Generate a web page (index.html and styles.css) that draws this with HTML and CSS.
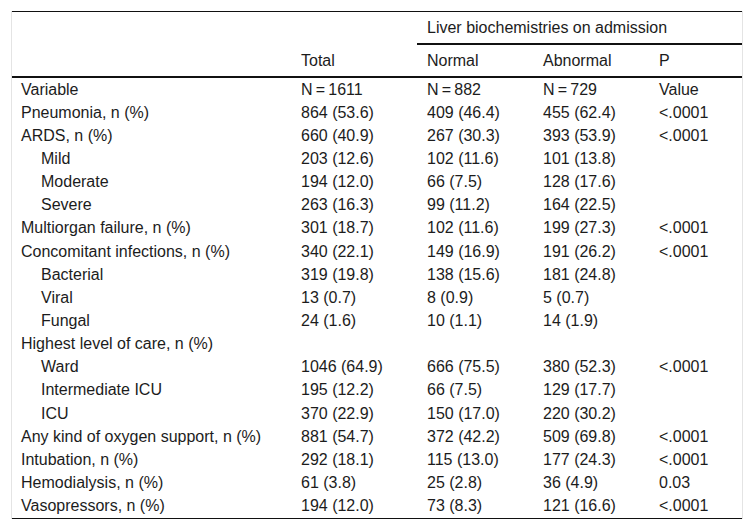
FILE: index.html
```html
<!DOCTYPE html>
<html>
<head>
<meta charset="utf-8">
<link rel="stylesheet" href="styles.css">
</head>
<body>
<div class="wrap">
<table class="tbl">
<colgroup>
<col class="c1"><col class="c2"><col class="c3"><col class="c4"><col class="c5">
</colgroup>
<thead>
<tr class="h1">
<th></th><th></th><th class="span" colspan="3">Liver biochemistries on admission</th>
</tr>
<tr class="h2">
<th></th><th>Total</th><th>Normal</th><th>Abnormal</th><th>P</th>
</tr>
</thead>
<tbody>
<tr><td>Variable</td><td>N&thinsp;=&thinsp;1611</td><td>N&thinsp;=&thinsp;882</td><td>N&thinsp;=&thinsp;729</td><td>Value</td></tr>
<tr><td>Pneumonia, n (%)</td><td>864 (53.6)</td><td>409 (46.4)</td><td>455 (62.4)</td><td>&lt;.0001</td></tr>
<tr><td>ARDS, n (%)</td><td>660 (40.9)</td><td>267 (30.3)</td><td>393 (53.9)</td><td>&lt;.0001</td></tr>
<tr><td class="ind">Mild</td><td>203 (12.6)</td><td>102 (11.6)</td><td>101 (13.8)</td><td></td></tr>
<tr><td class="ind">Moderate</td><td>194 (12.0)</td><td>66 (7.5)</td><td>128 (17.6)</td><td></td></tr>
<tr><td class="ind">Severe</td><td>263 (16.3)</td><td>99 (11.2)</td><td>164 (22.5)</td><td></td></tr>
<tr><td>Multiorgan failure, n (%)</td><td>301 (18.7)</td><td>102 (11.6)</td><td>199 (27.3)</td><td>&lt;.0001</td></tr>
<tr><td>Concomitant infections, n (%)</td><td>340 (22.1)</td><td>149 (16.9)</td><td>191 (26.2)</td><td>&lt;.0001</td></tr>
<tr><td class="ind">Bacterial</td><td>319 (19.8)</td><td>138 (15.6)</td><td>181 (24.8)</td><td></td></tr>
<tr><td class="ind">Viral</td><td>13 (0.7)</td><td>8 (0.9)</td><td>5 (0.7)</td><td></td></tr>
<tr><td class="ind">Fungal</td><td>24 (1.6)</td><td>10 (1.1)</td><td>14 (1.9)</td><td></td></tr>
<tr><td>Highest level of care, n (%)</td><td></td><td></td><td></td><td></td></tr>
<tr><td class="ind">Ward</td><td>1046 (64.9)</td><td>666 (75.5)</td><td>380 (52.3)</td><td>&lt;.0001</td></tr>
<tr><td class="ind">Intermediate ICU</td><td>195 (12.2)</td><td>66 (7.5)</td><td>129 (17.7)</td><td></td></tr>
<tr><td class="ind">ICU</td><td>370 (22.9)</td><td>150 (17.0)</td><td>220 (30.2)</td><td></td></tr>
<tr><td>Any kind of oxygen support, n (%)</td><td>881 (54.7)</td><td>372 (42.2)</td><td>509 (69.8)</td><td>&lt;.0001</td></tr>
<tr><td>Intubation, n (%)</td><td>292 (18.1)</td><td>115 (13.0)</td><td>177 (24.3)</td><td>&lt;.0001</td></tr>
<tr><td>Hemodialysis, n (%)</td><td>61 (3.8)</td><td>25 (2.8)</td><td>36 (4.9)</td><td>0.03</td></tr>
<tr><td>Vasopressors, n (%)</td><td>194 (12.0)</td><td>73 (8.3)</td><td>121 (16.6)</td><td>&lt;.0001</td></tr>
</tbody>
</table>
</div>
</body>
</html>
```
FILE: styles.css
```css
html, body {
  margin: 0;
  padding: 0;
  background: #ffffff;
}
body {
  font-family: "Liberation Sans", Arial, sans-serif;
  font-size: 16px;
  color: #1c1c1c;
}
.wrap {
  margin: 11px 0 0 11px;
  width: 732px;
  box-sizing: border-box;
  border-left: 1px solid #e4e4e4;
  border-right: 1px solid #e4e4e4;
}
.tbl {
  width: 100%;
  table-layout: fixed;
  border-collapse: separate;
  border-spacing: 0;
  border-top: 1px solid #111;
  border-bottom: 1px solid #111;
}
.c1 { width: 279px; }
.c2 { width: 126px; }
.c3 { width: 116px; }
.c4 { width: 116px; }
.c5 { width: 93px; }
.tbl th {
  font-weight: normal;
  text-align: left;
  padding: 0 0 0 10px;
  height: 31px;
  vertical-align: middle;
  border-bottom: 2px solid transparent;
}
.tbl .h1 th.span {
  border-bottom-color: #111;
}
.tbl .h2 th {
  border-bottom-color: #111;
}
.tbl td {
  padding: 0 0 0 10px;
  height: 23.15px;
  line-height: 18px;
  vertical-align: middle;
  white-space: nowrap;
}
.tbl th:first-child,
.tbl td:first-child {
  padding-left: 9px;
}
.tbl td.ind {
  padding-left: 29px;
}
```
